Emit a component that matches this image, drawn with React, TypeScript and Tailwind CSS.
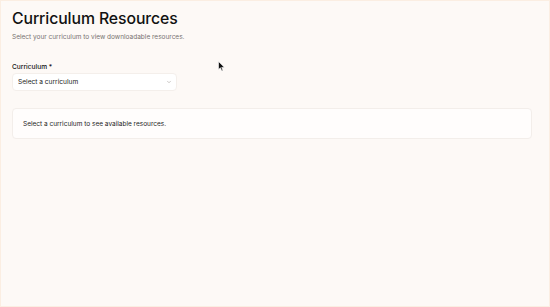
import { ChevronDown } from 'lucide-react';

export default function App() {
  return (
    <div
      className="relative h-[307px] w-[550px] overflow-hidden border border-[#fbeee2] bg-[#fdf9f6] text-[#111111]"
      style={{ fontFamily: 'Inter, "Liberation Sans", sans-serif' }}
    >
      <div className="flex flex-col pl-[11px] pr-[17px] pt-[6px]">
        {/* Header */}
        <h1 className="text-[15.8px] font-medium leading-[24px] tracking-[-0.1px]">Curriculum Resources</h1>
        <p className="mt-[1px] text-[6.5px] leading-[10px] text-[#777170]">
          Select your curriculum to view downloadable resources.
        </p>

        {/* Field */}
        <div className="mt-[20px] flex flex-col">
          <label className="text-[6.6px] font-medium leading-[10px]">Curriculum *</label>
          <button className="mt-[1px] flex h-[18px] w-[165px] items-center justify-between rounded-[4px] border border-[#f4efeb] bg-white pl-[5px] pr-[4px] text-left">
            <span className="text-[6.6px] leading-[10px] text-[#222]">Select a curriculum</span>
            <ChevronDown className="h-[6px] w-[6px] text-[#9a9490]" strokeWidth={2} />
          </button>
        </div>

        {/* Empty state */}
        <div className="mt-[17px] flex h-[31px] items-center rounded-[4px] border border-[#f3eeea] bg-[#fffdfc] px-[10px]">
          <span className="text-[6.5px] leading-[10px] text-[#222]">
            Select a curriculum to see available resources.
          </span>
        </div>
      </div>

      {/* Mouse cursor */}
      <svg className="absolute left-[217px] top-[60px]" width="7" height="11" viewBox="0 0 7 11">
        <path d="M0.5 0.5 L0.5 8.5 L2.4 6.8 L3.8 10 L5 9.5 L3.7 6.4 L6.3 6.2 Z" fill="#111" stroke="#fff" strokeWidth="0.6" />
      </svg>
    </div>
  );
}
